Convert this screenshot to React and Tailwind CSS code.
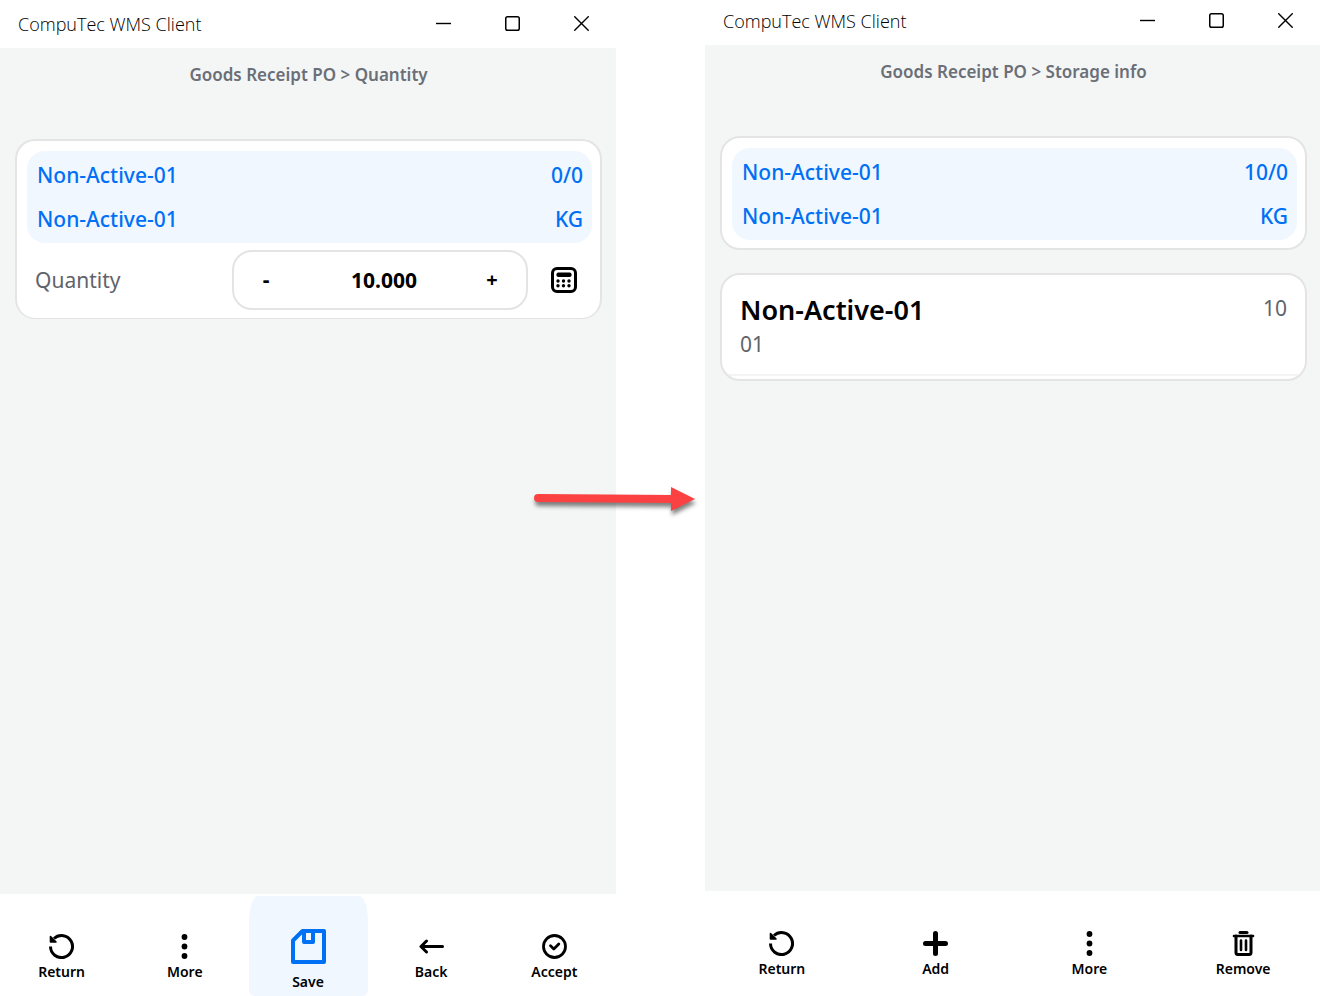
const FONT = "font-['Noto_Sans',sans-serif]";

function ReturnIcon() {
  return (
    <svg viewBox="0 0 25 25" className="w-[25px] h-[25px]" fill="none" stroke="currentColor" strokeWidth="3">
      <path d="M1.5 12.5A11 11 0 1 0 5 4.5" />
      <path d="M1.5 2.5v5.5h5.5z" fill="currentColor" strokeWidth="1.6" strokeLinejoin="round" />
    </svg>
  );
}

function MoreIcon() {
  return (
    <svg viewBox="0 0 25 25" className="w-[25px] h-[25px]" fill="currentColor">
      <circle cx="12.5" cy="3" r="2.9" />
      <circle cx="12.5" cy="12.5" r="2.9" />
      <circle cx="12.5" cy="22" r="2.9" />
    </svg>
  );
}

function SaveIcon() {
  return (
    <svg viewBox="0 0 35 35" className="w-[35px] h-[35px]" fill="none" stroke="#0070f5" strokeWidth="4" strokeLinejoin="round">
      <path d="M11.5 2H33v31H2V11.5z" />
      <path d="M13 2v11h9V2" />
    </svg>
  );
}

function BackIcon() {
  return (
    <svg viewBox="0 0 25 25" className="w-[25px] h-[25px]" fill="none" stroke="currentColor" strokeWidth="3" strokeLinecap="round" strokeLinejoin="round">
      <path d="M23.5 12.5H2M7.5 7L2 12.5L7.5 18" />
    </svg>
  );
}

function AcceptIcon() {
  return (
    <svg viewBox="0 0 25 25" className="w-[25px] h-[25px]" fill="none" stroke="currentColor" strokeWidth="2.8" strokeLinecap="round" strokeLinejoin="round">
      <circle cx="12.5" cy="12.5" r="11" />
      <path d="M8.5 11.8l3.3 3.2l5-5" />
    </svg>
  );
}

function AddIcon() {
  return (
    <svg viewBox="0 0 25 25" className="w-[25px] h-[25px]" stroke="currentColor" strokeWidth="5" strokeLinecap="round">
      <path d="M12.5 2.5v20M2.5 12.5h20" />
    </svg>
  );
}

function RemoveIcon() {
  return (
    <svg viewBox="0 0 25 25" className="w-[25px] h-[25px]" fill="none" stroke="currentColor" strokeLinecap="round" strokeLinejoin="round">
      <path d="M9 1.5h7" strokeWidth="3" />
      <path d="M3 5h19" strokeWidth="2.6" />
      <path d="M5 5v16.5a2 2 0 0 0 2 2h11a2 2 0 0 0 2-2V5" strokeWidth="3" />
      <path d="M10 9.5v9.5M15 9.5v9.5" strokeWidth="2.6" />
    </svg>
  );
}

function CalculatorIcon() {
  return (
    <svg viewBox="0 0 26 26" className="w-[26px] h-[26px]" fill="currentColor">
      <rect x="1.5" y="1.5" width="23" height="23" rx="4.5" fill="none" stroke="currentColor" strokeWidth="3" />
      <rect x="5.5" y="5.5" width="15" height="4.5" rx="1.8" />
      {[7, 12.5, 18].map((x) =>
        [14, 18.7].map((y) => <circle key={`${x}-${y}`} cx={x} cy={y} r="1.7" />)
      )}
    </svg>
  );
}

function TitleBar() {
  const button = "w-[69px] h-full flex items-center justify-center";
  return (
    <header className="h-[45px] flex items-center bg-white">
      <h1 className="flex-1 pl-[18px] pb-1 text-[18px] leading-6 font-light text-black font-['Open_Sans',sans-serif]">
        CompuTec WMS Client
      </h1>
      <div className="flex h-full pb-1">
        <button type="button" aria-label="Minimize" className={button}>
          <svg viewBox="0 0 15 15" className="w-[15px] h-[15px]" stroke="black" strokeWidth="1.4">
            <path d="M0 7.5h15" />
          </svg>
        </button>
        <button type="button" aria-label="Maximize" className={button}>
          <svg viewBox="0 0 15 15" className="w-[15px] h-[15px]" fill="none" stroke="black" strokeWidth="1.5">
            <rect x="0.75" y="0.75" width="13.5" height="13.5" rx="1.8" />
          </svg>
        </button>
        <button type="button" aria-label="Close" className={button}>
          <svg viewBox="0 0 15 15" className="w-[15px] h-[15px]" stroke="black" strokeWidth="1.4">
            <path d="M0.3 0.3l14.4 14.4M14.7 0.3L0.3 14.7" />
          </svg>
        </button>
      </div>
    </header>
  );
}

function Breadcrumb({ children }) {
  return (
    <nav className="h-[54px] text-center text-[17px] leading-[54px] font-semibold text-[#6b6f77]">
      {children}
    </nav>
  );
}

function ItemSummary({ quantity }) {
  return (
    <div className="rounded-[18px] bg-[#f0f7ff] pl-[10px] pr-[9px] py-[2px] text-[21px] leading-[44px] font-medium text-[#0070f5]">
      <div className="flex justify-between">
        <span>Non-Active-01</span>
        <span>{quantity}</span>
      </div>
      <div className="flex justify-between">
        <span>Non-Active-01</span>
        <span>KG</span>
      </div>
    </div>
  );
}

function Toolbar({ items }) {
  return (
    <footer className="h-[102px] flex bg-white">
      {items.map(({ label, icon: Icon, primary }) => (
        <div key={label} className="flex-1 flex justify-center pt-[2px]">
          <button
            type="button"
            className={
              primary
                ? "w-[119px] h-[100px] pt-[33px] flex flex-col items-center bg-[#f0f7ff] rounded-[9px_9px_6px_6px/26px_26px_6px_6px]"
                : "w-[119px] h-[100px] pt-[38px] flex flex-col items-center"
            }
          >
            <Icon />
            <span className={primary ? "mt-2 text-[14px] leading-5 font-semibold" : "mt-[3px] text-[14px] leading-5 font-semibold"}>
              {label}
            </span>
          </button>
        </div>
      ))}
    </footer>
  );
}

function QuantityWindow() {
  return (
    <section className="flex flex-col pt-[3px]">
      <TitleBar />
      <main className="flex-1 bg-[#f4f6f6] pl-[15px] pr-[14px]">
        <Breadcrumb>Goods Receipt PO &gt; Quantity</Breadcrumb>
        <div className="mt-[37px] rounded-[20px] border-2 border-b border-[#e4e4e4] bg-white pl-[10px] pr-2 pt-[10px] pb-2">
          <ItemSummary quantity="0/0" />
          <div className="mt-[7px] flex items-center">
            <label htmlFor="quantity" className="flex-1 pl-2 text-[21px] leading-7 text-[#5f636b]">
              Quantity
            </label>
            <div className="w-[296px] h-[60px] flex items-center rounded-[20px] border-2 border-[#e4e4e4] text-[21px] font-bold text-black">
              <button type="button" aria-label="Decrease" className="w-16 h-full">-</button>
              <input
                id="quantity"
                type="text"
                defaultValue="10.000"
                className="flex-1 min-w-0 h-full pl-3 bg-transparent text-center outline-none"
              />
              <button type="button" aria-label="Increase" className="w-[68px] h-full text-[20px]">+</button>
            </div>
            <button type="button" aria-label="Calculator" className="ml-[23px] mr-[15px]">
              <CalculatorIcon />
            </button>
          </div>
        </div>
      </main>
      <Toolbar
        items={[
          { label: "Return", icon: ReturnIcon },
          { label: "More", icon: MoreIcon },
          { label: "Save", icon: SaveIcon, primary: true },
          { label: "Back", icon: BackIcon },
          { label: "Accept", icon: AcceptIcon },
        ]}
      />
    </section>
  );
}

function StorageWindow() {
  return (
    <section className="flex flex-col pb-[3px]">
      <TitleBar />
      <main className="flex-1 bg-[#f4f6f6] pl-[15px] pr-[13px]">
        <Breadcrumb>Goods Receipt PO &gt; Storage info</Breadcrumb>
        <div className="mt-[37px] rounded-[20px] border-2 border-[#e4e4e4] bg-white pl-[10px] pr-2 pt-[10px] pb-2">
          <ItemSummary quantity="10/0" />
        </div>
        <div className="mt-[23px] overflow-hidden rounded-[20px] border-2 border-[#e4e4e4] bg-white pb-[3px]">
          <div className="h-[101px] flex justify-between border-b-2 border-[#f4f4f4] px-[18px] pt-[17px] text-[21px] leading-8 text-[#5f636b]">
            <div>
              <h2 className="text-[27px] leading-9 font-semibold text-black">Non-Active-01</h2>
              <p>01</p>
            </div>
            <span>10</span>
          </div>
        </div>
      </main>
      <Toolbar
        items={[
          { label: "Return", icon: ReturnIcon },
          { label: "Add", icon: AddIcon },
          { label: "More", icon: MoreIcon },
          { label: "Remove", icon: RemoveIcon },
        ]}
      />
    </section>
  );
}

// Red arrow that leads from the first window to the second
function FlowArrow() {
  return (
    <svg
      viewBox="0 0 170 40"
      className="absolute top-1/2 left-1/2 -ml-[130px] -mt-[18px] w-[170px] h-10 drop-shadow-[1px_4px_2px_rgba(0,0,0,0.5)]"
      aria-hidden="true"
    >
      <path d="M8 18L144 19" stroke="#fb4141" strokeWidth="8" strokeLinecap="round" />
      <path d="M141 7L165 19L141 31z" fill="#fb4141" />
    </svg>
  );
}

export default function App() {
  return (
    <div className={`relative min-h-screen grid grid-cols-[616fr_615fr] gap-[89px] bg-white text-black ${FONT}`}>
      <QuantityWindow />
      <StorageWindow />
      <FlowArrow />
    </div>
  );
}
